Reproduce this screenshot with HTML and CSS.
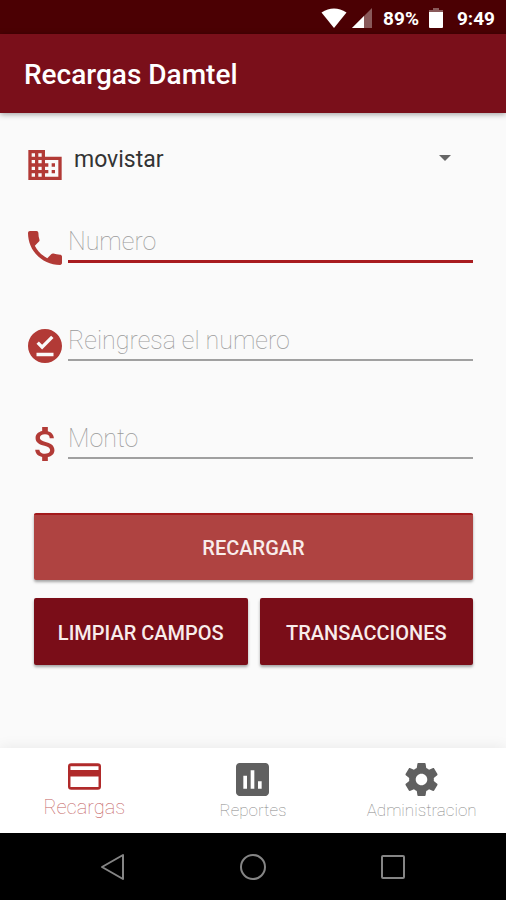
FILE: index.html
```html
<!DOCTYPE html>
<html lang="es">
<head>
<meta charset="utf-8">
<meta name="viewport" content="width=device-width, initial-scale=1">
<title>Recargas Damtel</title>
<link rel="stylesheet" href="styles.css">
</head>
<body>
<div class="status-bar">
  <svg class="wifi" viewBox="0 0 26 20" aria-hidden="true"><path d="M0.500 4.500Q13-3.500 25.500 4.500L13 20z"/></svg>
  <svg class="signal" viewBox="0 0 20 20" aria-hidden="true"><path class="faint" d="M20 0v20H0z"/><path d="M12 8v12H0z"/></svg>
  <span class="battery-level">89%</span>
  <svg class="battery" viewBox="0 0 14 20" aria-hidden="true"><path class="faint" d="M4 0h6v2h4v3H0V2h4z"/><path d="M0 4h14v15a1 1 0 0 1-1 1H1a1 1 0 0 1-1-1z"/></svg>
  <span>9:49</span>
</div>
<header class="app-bar"><h1>Recargas Damtel</h1></header>
<main>
  <form class="recharge-form">
    <div class="row operator">
      <label class="row-icon" for="operator">
        <svg class="business" viewBox="2 3 20 18" aria-hidden="true"><path d="M12 7V3H2v18h20V7H12zM6 19H4v-2h2v2zm0-4H4v-2h2v2zm0-4H4V9h2v2zm0-4H4V5h2v2zm4 12H8v-2h2v2zm0-4H8v-2h2v2zm0-4H8V9h2v2zm0-4H8V5h2v2zm10 12h-8v-2h2v-2h-2v-2h2v-2h-2V9h8v10zm-2-8h-2v2h2v-2zm0 4h-2v2h2v-2z"/></svg>
      </label>
      <select id="operator" aria-label="Operador"><option>movistar</option></select>
      <svg class="arrow" viewBox="0 0 12 6" aria-hidden="true"><path d="M0 0h12L6 6z"/></svg>
    </div>
    <div class="row focused">
      <label class="row-icon" for="number">
        <svg viewBox="3 3 18 18" aria-hidden="true"><path d="M6.620 10.790c1.440 2.830 3.760 5.140 6.590 6.590l2.200-2.200c.27-.27.67-.36 1.020-.24 1.120.37 2.330.57 3.570.57.55 0 1 .45 1 1V20c0 .55-.45 1-1 1-9.390 0-17-7.610-17-17 0-.55.45-1 1-1h3.500c.55 0 1 .45 1 1 0 1.250.2 2.450.57 3.570.11.35.03.74-.25 1.020l-2.200 2.200z"/></svg>
      </label>
      <input id="number" type="tel" placeholder="Numero" aria-label="Numero">
    </div>
    <div class="row">
      <label class="row-icon" for="number-again">
        <svg viewBox="2 2 20 20" aria-hidden="true"><path d="M12 2C6.500 2 2 6.500 2 12s4.500 10 10 10 10-4.500 10-10S17.500 2 12 2zm5 16H7v-2h10v2zm-6.700-4L7 10.700l1.400-1.400 1.900 1.900 5.300-5.300L17 7.300 10.300 14z"/></svg>
      </label>
      <input id="number-again" type="tel" placeholder="Reingresa el numero" aria-label="Reingresa el numero">
    </div>
    <div class="row">
      <label class="row-icon" for="amount">
        <svg viewBox="2.500 3 18 18" aria-hidden="true"><path d="M11.800 10.900c-2.270-.59-3-1.200-3-2.150 0-1.090 1.010-1.850 2.700-1.850 1.780 0 2.440.85 2.500 2.100h2.210c-.07-1.720-1.120-3.300-3.210-3.810V3h-3v2.160c-1.940.42-3.500 1.680-3.500 3.610 0 2.310 1.910 3.460 4.700 4.130 2.500.6 3 1.480 3 2.410 0 .69-.49 1.790-2.700 1.790-2.060 0-2.870-.92-2.980-2.100h-2.200c.12 2.190 1.760 3.420 3.680 3.830V21h3v-2.150c1.950-.37 3.500-1.500 3.500-3.550 0-2.840-2.430-3.810-4.700-4.400z"/></svg>
      </label>
      <input id="amount" type="text" inputmode="decimal" placeholder="Monto" aria-label="Monto">
    </div>
    <div class="actions">
      <button class="primary" type="submit">RECARGAR</button>
      <button type="reset">LIMPIAR CAMPOS</button>
      <button type="button">TRANSACCIONES</button>
    </div>
  </form>
</main>
<nav class="tabs">
  <a class="active" href="#recargas" aria-current="page">
    <svg viewBox="2 4 20 16" aria-hidden="true"><path fill-rule="evenodd" d="M4 4h16a2 2 0 0 1 2 2v12a2 2 0 0 1-2 2H4a2 2 0 0 1-2-2V6a2 2 0 0 1 2-2zM3.500 5.800v2.200h17V5.800zM3.500 12v6.300h17V12z"/></svg>
    <span>Recargas</span>
  </a>
  <a href="#reportes">
    <svg viewBox="3 3 18 18" aria-hidden="true"><path d="M19 3H5c-1.100 0-2 .9-2 2v14c0 1.100.9 2 2 2h14c1.100 0 2-.9 2-2V5c0-1.100-.9-2-2-2zM9 17H7v-7h2v7zm4 0h-2V7h2v10zm4 0h-2v-4h2v4z"/></svg>
    <span>Reportes</span>
  </a>
  <a href="#administracion">
    <svg viewBox="2 2 20 20" aria-hidden="true"><path d="M19.430 12.980c.04-.32.07-.64.07-.98s-.03-.66-.07-.98l2.110-1.650c.19-.15.24-.42.12-.64l-2-3.460c-.12-.22-.39-.3-.61-.22l-2.490 1c-.52-.4-1.080-.73-1.690-.98l-.38-2.650C14.460 2.180 14.250 2 14 2h-4c-.25 0-.46.18-.49.42l-.38 2.650c-.61.25-1.170.59-1.690.98l-2.490-1c-.23-.09-.49 0-.61.22l-2 3.460c-.13.22-.07.49.12.64l2.110 1.650c-.04.32-.07.65-.07.98s.03.66.07.98l-2.110 1.650c-.19.15-.24.42-.12.64l2 3.460c.12.22.39.3.61.22l2.490-1c.52.4 1.080.73 1.690.98l.38 2.650c.03.24.24.42.49.42h4c.25 0 .46-.18.49-.42l.38-2.650c.61-.25 1.170-.59 1.690-.98l2.490 1c.23.09.49 0 .61-.22l2-3.460c.12-.22.07-.49-.12-.64l-2.110-1.650zM12 15.500c-1.930 0-3.500-1.570-3.500-3.500s1.570-3.500 3.500-3.500 3.500 1.570 3.500 3.500-1.570 3.500-3.500 3.500z"/></svg>
    <span>Administracion</span>
  </a>
</nav>
<div class="system-bar">
  <button type="button" aria-label="Atrás"><svg viewBox="0 0 28 28" aria-hidden="true"><path d="M24 2v24L3 14z"/></svg></button>
  <button type="button" aria-label="Inicio"><svg viewBox="0 0 28 28" aria-hidden="true"><circle cx="14" cy="14" r="12"/></svg></button>
  <button type="button" aria-label="Recientes"><svg viewBox="0 0 28 28" aria-hidden="true"><rect x="3" y="3" width="22" height="22" rx="1"/></svg></button>
</div>
</body>
</html>
```
FILE: styles.css
```css
* {
  box-sizing: border-box;
}

body {
  margin: 0;
  min-height: 100vh;
  display: flex;
  flex-direction: column;
  background: #fafafa;
  font-family: Roboto, "Liberation Sans", sans-serif;
}

svg {
  display: block;
  fill: currentColor;
}

button,
input,
select {
  font-family: inherit;
  border: 0;
  margin: 0;
  outline: 0;
}

.status-bar {
  height: 34px;
  padding: 2px 11px 0 0;
  display: flex;
  align-items: center;
  justify-content: flex-end;
  background: #4b0003;
  color: #fff;
  font-size: 19px;
  font-weight: 700;
}

.wifi {
  width: 26px;
  height: 20px;
}

.signal {
  width: 20px;
  height: 20px;
  margin: 0 11px 0 5px;
}

.battery {
  width: 14px;
  height: 20px;
  margin: 0 14px 0 10px;
}

.faint {
  opacity: 0.35;
}

.app-bar {
  height: 79px;
  padding: 2px 24px 0;
  display: flex;
  align-items: center;
  background: #7a0f1a;
  color: #fff;
  box-shadow: 0 1px 6px rgba(0, 0, 0, 0.4);
}

h1 {
  margin: 0;
  font-size: 28px;
  font-weight: 500;
}

main {
  flex: 1;
  padding: 23px 33px 24px 28px;
}

.recharge-form {
  display: flex;
  flex-direction: column;
  gap: 54px;
}

.row {
  height: 44px;
  display: flex;
  align-items: center;
  gap: 6px;
}

.operator {
  margin-bottom: -15px;
}

.row-icon {
  width: 34px;
  padding-top: 14px;
  flex: none;
  color: #b23a36;
}

.row-icon svg {
  width: 34px;
  height: 34px;
}

.row-icon .business {
  height: 30px;
}

select {
  flex: 1;
  min-width: 0;
  height: 44px;
  padding: 2px 6px 0;
  appearance: none;
  background: transparent;
  color: #333;
  font-size: 23px;
}

.arrow {
  width: 12px;
  height: 6px;
  margin-right: 22px;
  color: #666;
}

input {
  flex: 1;
  min-width: 0;
  height: 44px;
  padding: 4px 0 0;
  border-bottom: 2px solid #a0a0a0;
  background: transparent;
  color: #222;
  font-size: 25px;
  font-weight: 100;
}

.focused input {
  border-bottom: 3px solid #a81c20;
}

input::placeholder {
  color: #999;
  opacity: 1;
}

.actions {
  display: grid;
  grid-template-columns: 1fr 1fr;
  gap: 18px 12px;
  padding-left: 6px;
}

.actions button {
  height: 67px;
  padding: 2px 0 0;
  border-radius: 2px;
  background: #7a0d18;
  box-shadow: 0 2px 3px rgba(0, 0, 0, 0.35);
  color: #f8eceb;
  font-size: 20px;
  font-weight: 500;
}

.actions .primary {
  grid-column: 1 / -1;
  padding: 0;
  border-top: 2px solid #a3191b;
  background: #af4341;
}

.tabs {
  height: 85px;
  padding-top: 15px;
  display: grid;
  grid-template-columns: repeat(3, 1fr);
  background: #fff;
  box-shadow: 0 0 14px rgba(0, 0, 0, 0.08);
}

.tabs a {
  display: flex;
  flex-direction: column;
  align-items: center;
  gap: 2px;
  color: #606060;
  font-size: 17px;
  font-weight: 100;
  line-height: 24px;
  text-decoration: none;
}

.tabs svg {
  width: 33px;
  height: 33px;
}

.tabs .active {
  gap: 5px;
  color: #b02a2a;
  font-size: 20px;
}

.tabs .active svg {
  height: 27px;
}

.tabs span {
  opacity: 0.75;
}

.system-bar {
  height: 67px;
  padding: 0 43px;
  display: grid;
  grid-template-columns: repeat(3, 1fr);
  background: #000;
}

.system-bar button {
  padding: 0;
  display: grid;
  place-items: center;
  background: transparent;
  color: #858585;
}

.system-bar svg {
  width: 28px;
  height: 28px;
  fill: none;
  stroke: currentColor;
  stroke-width: 2;
  stroke-linejoin: round;
}
```
